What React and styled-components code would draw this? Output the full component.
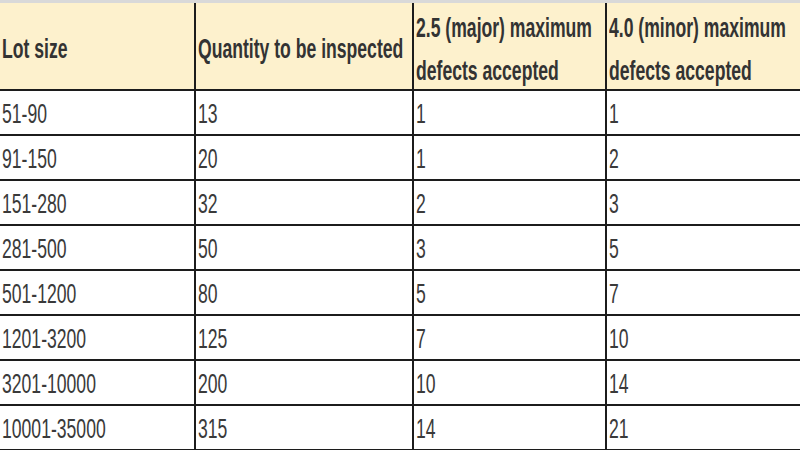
import React from "react";
import styled, { createGlobalStyle } from "styled-components";

const HEADERS = [
  "Lot size",
  "Quantity to be inspected",
  "2.5 (major) maximum defects accepted",
  "4.0 (minor) maximum defects accepted",
];

const ROWS = [
  ["51-90", "13", "1", "1"],
  ["91-150", "20", "1", "2"],
  ["151-280", "32", "2", "3"],
  ["281-500", "50", "3", "5"],
  ["501-1200", "80", "5", "7"],
  ["1201-3200", "125", "7", "10"],
  ["3201-10000", "200", "10", "14"],
  ["10001-35000", "315", "14", "21"],
];

const WIDTHS = [195, 218, 193, 194];

export default function App() {
  return (
    <>
      <GlobalStyle />
      <Page>
        <Table>
          <colgroup>
            {WIDTHS.map((w, i) => (
              <col key={i} style={{ width: w }} />
            ))}
          </colgroup>
          <thead>
            <tr>
              {HEADERS.map((h) => (
                <HeadCell key={h}>
                  <Text>{h}</Text>
                </HeadCell>
              ))}
            </tr>
          </thead>
          <tbody>
            {ROWS.map((row) => (
              <tr key={row[0]}>
                {row.map((v, i) => (
                  <Cell key={i}>
                    <Text>{v}</Text>
                  </Cell>
                ))}
              </tr>
            ))}
          </tbody>
        </Table>
      </Page>
    </>
  );
}

const GlobalStyle = createGlobalStyle`
  body {
    margin: 0;
    background: #fff;
  }
`;

const Page = styled.div`
  width: 800px;
  height: 450px;
  overflow: hidden;
  border-top: 3px solid #d9d9d9;
  box-sizing: border-box;
  font-family: "Liberation Sans Narrow", "Liberation Sans", Arial, sans-serif;
  color: #3a3a3a;
`;

const Table = styled.table`
  width: 800px;
  table-layout: fixed;
  border-collapse: collapse;

  td:first-child,
  th:first-child {
    border-left: none;
  }
  td:last-child,
  th:last-child {
    border-right: 1px solid #cfc6b0;
  }
`;

const HeadCell = styled.th`
  height: 81px;
  padding: 5px 0 0 2px;
  background: #fdf1cd;
  border: 2px solid #1c1c1c;
  border-top: none;
  text-align: left;
  vertical-align: middle;
  font-weight: 700;
  font-size: 17.6px;
  line-height: 28px;
  color: #333;
`;

const Cell = styled.td`
  height: 40px;
  padding: 3px 0 0 2px;
  border: 2px solid #1c1c1c;
  text-align: left;
  vertical-align: middle;
  font-size: 17.6px;
  line-height: 22px;
`;

const Text = styled.span`
  display: inline-block;
  transform: scaleY(1.55);
  transform-origin: center;
`;
